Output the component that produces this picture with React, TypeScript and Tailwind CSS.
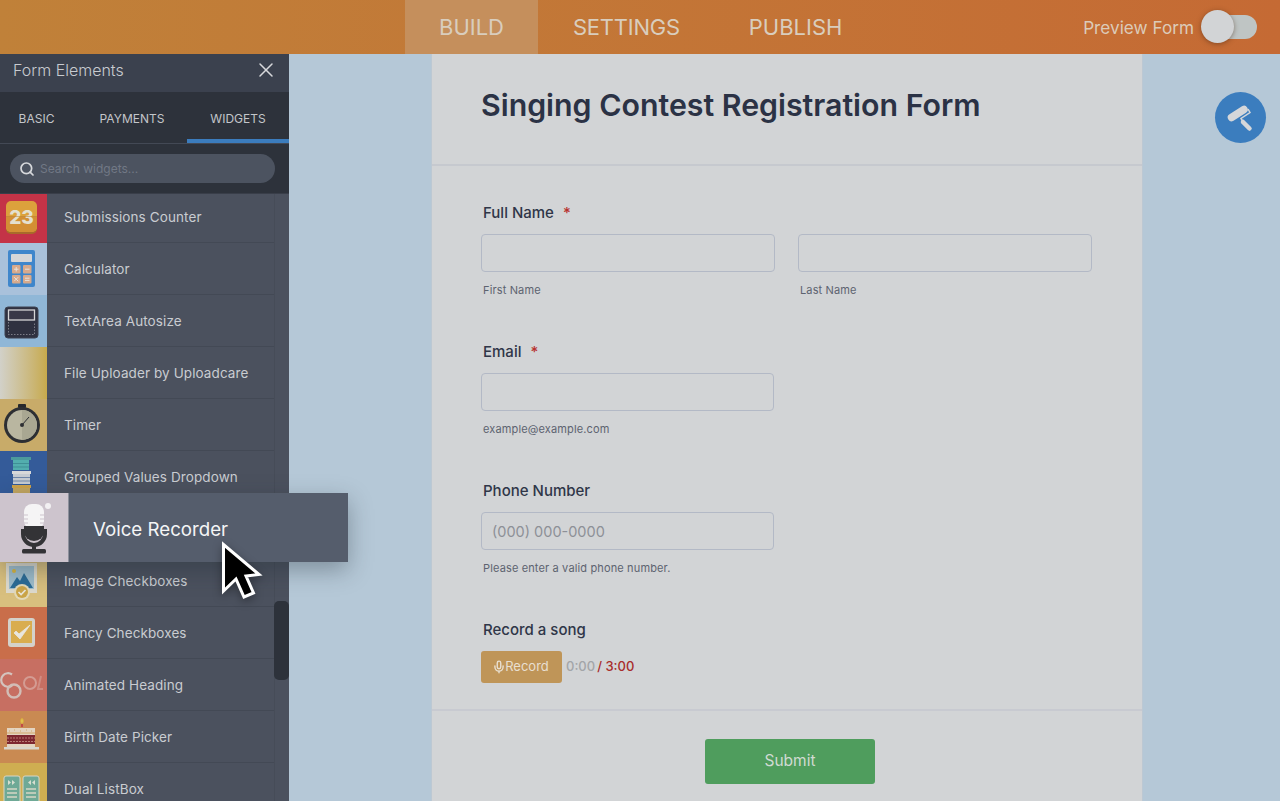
import { FC, ReactNode } from "react";
import { Mic, Search, X } from "lucide-react";

// Small widget tiles, all drawn on a 47x52 box
const Tile: FC<{ children: ReactNode }> = ({ children }) => (
  <svg viewBox="0 0 47 52" width="47" height="52" className="block">
    {children}
  </svg>
);

const CounterIcon = () => (
  <Tile>
    <rect x="6" y="11" width="31" height="32" rx="5" fill="#a96a2a" />
    <rect x="6" y="10" width="31" height="31" rx="5" fill="#dca13c" />
    <path d="M6 25h31v11a5 5 0 0 1-5 5H11a5 5 0 0 1-5-5z" fill="#d38f34" />
    <text x="21.5" y="32.5" textAnchor="middle" fontSize="19" fontWeight="800" fill="#e4e0cf" fontFamily="Inter, sans-serif">
      23
    </text>
    <rect x="6" y="25" width="31" height="0.6" fill="#c08a3a" />
  </Tile>
);

const CalculatorIcon = () => (
  <Tile>
    <rect x="8" y="7" width="27" height="37" rx="2" fill="#3f86cb" />
    <rect x="11" y="11" width="21" height="8" rx="1" fill="#d5d6d8" />
    {[
      [12, 22],
      [23, 22],
      [12, 32],
      [23, 32],
    ].map(([x, y]) => (
      <rect key={`${x}-${y}`} x={x} y={y} width="8.5" height="8.5" rx="1" fill="#d6a98c" />
    ))}
    <path d="M14 26.2h4.5M16.2 24v4.5M25 26.2h4.5M14.2 34.2l4 4M18.2 34.2l-4 4M25 35.2h4.5M25 37.4h4.5" stroke="#e6e2dc" strokeWidth="1" fill="none" />
  </Tile>
);

const TextAreaIcon = () => (
  <Tile>
    <rect x="5" y="12" width="33" height="31" rx="3" fill="#2f3140" stroke="#3e4351" />
    <rect x="8.5" y="15" width="26" height="10" fill="#3a3848" stroke="#d6d5d6" strokeWidth="1.3" />
    <path d="M8.5 27v12.5h26V27" fill="none" stroke="#8f909a" strokeWidth="0.8" strokeDasharray="1.5 1.5" />
  </Tile>
);

const TimerIcon = () => (
  <Tile>
    <rect x="18" y="5" width="8" height="4" rx="1" fill="#26282c" />
    <circle cx="22" cy="26" r="18" fill="#2d2f33" />
    <circle cx="22" cy="26" r="15" fill="#b9b6a0" />
    <path d="M22 11a15 15 0 0 1 0 30z" fill="#a9a792" />
    <path d="M22 26l7-8" stroke="#2d2f33" strokeWidth="1" />
    <circle cx="22" cy="26" r="2" fill="#2d2f33" />
  </Tile>
);

const StackIcon = () => (
  <Tile>
    <rect x="11" y="6" width="20" height="3" fill="#4b9a9c" />
    <rect x="13" y="9" width="16" height="10" fill="#52aeae" />
    <path d="M13 12.5h16M13 16h16" stroke="#3f8f95" />
    <rect x="12" y="20" width="19" height="3" fill="#d7d8d9" />
    <rect x="13" y="23" width="17" height="10" fill="#c5cbd2" />
    <path d="M13 26.5h17M13 30h17" stroke="#6e86a9" />
    <rect x="12" y="34" width="19" height="3" fill="#cda249" />
    <rect x="13" y="37" width="17" height="8" fill="#c3a660" />
  </Tile>
);

const ImageCheckIcon = () => (
  <Tile>
    <rect x="6" y="8" width="31" height="30" fill="#dcd9cd" />
    <rect x="9" y="11" width="25" height="23" fill="#9dbccb" />
    <circle cx="14" cy="16" r="2" fill="#d7b53f" />
    <path d="M10 33l7-11 3 4 4-8 9 15z" fill="#2c6c96" />
    <circle cx="22" cy="37" r="8" fill="#e3d9b8" />
    <circle cx="22" cy="37" r="6" fill="#cba548" />
    <path d="M18.5 37l2.6 2.6 4.4-4.6" stroke="#e8e5da" strokeWidth="1.7" fill="none" />
  </Tile>
);

const CheckBoxIcon = () => (
  <Tile>
    <rect x="8" y="11" width="27" height="29" rx="3" fill="#d4d2ca" />
    <rect x="11" y="14" width="21" height="22" fill="#d9ad4f" />
    <path d="M14 26l2-2 3 3 11-9-10 14z" fill="#e8e6de" stroke="#e8e6de" strokeWidth="0.8" strokeLinejoin="round" />
  </Tile>
);

const CoolIcon = () => (
  <Tile>
    <path d="M12 15.5a6.8 6.8 0 1 0 0 11" fill="none" stroke="#d4c4be" strokeWidth="2.2" />
    <circle cx="14" cy="32" r="6.5" fill="none" stroke="#d2bdb6" strokeWidth="2.4" />
    <circle cx="30" cy="24" r="6" fill="none" stroke="#d49c93" strokeWidth="2" />
    <path d="M41 17l-3 13h5" fill="none" stroke="#d08c82" strokeWidth="2" />
  </Tile>
);

const CakeIcon = () => (
  <Tile>
    <path d="M22 7c-2 2-2 4 0 6 2-2 2-4 0-6z" fill="#e1c24f" stroke="#d9a93f" />
    <rect x="21" y="13" width="2" height="3" fill="#c24a46" />
    <rect x="7" y="17" width="28" height="19" fill="#e3d4c0" />
    <path d="M7 22h28M9 20h1M14 19h1M20 20h1M26 19h1M31 20h1" stroke="#d2a76a" strokeWidth="1" />
    <rect x="7" y="24" width="28" height="9" fill="#7d2730" />
    <path d="M7 27h28M7 30.5h28" stroke="#c69186" strokeWidth="0.8" strokeDasharray="2 1" />
    <rect x="4" y="36" width="35" height="2.5" fill="#d9d6cc" />
  </Tile>
);

const DualListIcon = () => (
  <Tile>
    {[4, 23].map((x) => (
      <g key={x}>
        <rect x={x} y="13" width="16" height="39" rx="2" fill="#6fa996" stroke="#d8d5c5" />
        <path d={`M${x + 3} 26h10M${x + 3} 30h10M${x + 3} 34h10`} stroke="#d6d6c5" strokeWidth="1.6" />
      </g>
    ))}
    <path d="M8 17l3 2.5-3 2.5zM12 17l3 2.5-3 2.5zM35 17l-3 2.5 3 2.5zM31 17l-3 2.5 3 2.5z" fill="#d8dfd0" />
  </Tile>
);

const widgets: { name: string; bg: string; icon?: ReactNode }[] = [
  { name: "Submissions Counter", bg: "bg-[#c43347]", icon: <CounterIcon /> },
  { name: "Calculator", bg: "bg-[#a9c1db]", icon: <CalculatorIcon /> },
  { name: "TextArea Autosize", bg: "bg-[#90b7d7]", icon: <TextAreaIcon /> },
  { name: "File Uploader by Uploadcare", bg: "bg-gradient-to-r from-[#d2d1c9] to-[#c7aa4b]" },
  { name: "Timer", bg: "bg-[#c8ab69]", icon: <TimerIcon /> },
  { name: "Grouped Values Dropdown", bg: "bg-[#345b99]", icon: <StackIcon /> },
  { name: "", bg: "bg-[#cdc4cd]" },
  { name: "Image Checkboxes", bg: "bg-[#d8bf7e]", icon: <ImageCheckIcon /> },
  { name: "Fancy Checkboxes", bg: "bg-[#c96e4a]", icon: <CheckBoxIcon /> },
  { name: "Animated Heading", bg: "bg-[#c76f62]", icon: <CoolIcon /> },
  { name: "Birth Date Picker", bg: "bg-[#c98a52]", icon: <CakeIcon /> },
  { name: "Dual ListBox", bg: "bg-[#cfae51]", icon: <DualListIcon /> },
];

const FieldLabel: FC<{ text: string; required?: boolean }> = ({ text, required }) => (
  <label className="block h-5 pl-[2px] pt-[1px] text-[15px] leading-5 font-medium text-[#2f3648]">
    {text}
    {required && <span className="ml-[9px] text-[#b8322f]">*</span>}
  </label>
);

const TextInput: FC<{ width: string; placeholder?: string }> = ({ width, placeholder }) => (
  <input
    placeholder={placeholder}
    readOnly
    className={`${width} block h-[38px] rounded-[4px] border border-[#b3b9c6] bg-transparent px-[10px] text-[14.5px] text-[#2f3648] outline-none placeholder:text-[#8d9097]`}
  />
);

const SubLabel: FC<{ text: string }> = ({ text }) => (
  <p className="mt-[11px] h-[14px] pl-[2px] text-[11px] leading-[14px] tracking-[0.14px] text-[#5d6370]">{text}</p>
);

const App: FC = () => {
  return (
    <div className="flex h-screen flex-col overflow-hidden bg-[#b5c8d7] font-['Inter',sans-serif]">
      {/* Top bar */}
      <header className="flex h-[54px] shrink-0 items-center bg-gradient-to-r from-[#c08139] to-[#c56a34] pl-[405px] pr-[23px]">
        <nav className="flex h-full text-[22px] text-[#d9cdbd]">
          <div className="flex w-[133px] items-center justify-center bg-[#c58f5c]">BUILD</div>
          <div className="flex items-center px-[35px] tracking-[-0.25px]">SETTINGS</div>
          <div className="flex items-center px-[34px]">PUBLISH</div>
        </nav>

        <div className="ml-auto flex items-center">
          <span className="mt-[2px] text-[17.2px] text-[#dccbb9]">Preview Form</span>
          <div className="relative ml-[11px] h-6 w-[52px] rounded-full bg-[#bfc5c4]">
            <div className="absolute left-[-4px] top-[-5px] h-[33px] w-[33px] rounded-full bg-[#d2d4d6] shadow-[0_1px_5px_rgba(70,40,20,0.5)]" />
          </div>
        </div>
      </header>

      <div className="relative flex min-h-0 flex-1">
        {/* Form elements sidebar */}
        <aside className="flex w-[289px] shrink-0 flex-col overflow-hidden bg-[#4b515e]">
          <div className="flex h-[38px] shrink-0 items-center justify-between bg-[#3b414e] pb-[6px] pl-[13px] pr-[11px]">
            <span className="text-[16px] font-light text-[#c8cbd0]">Form Elements</span>
            <X size={24} strokeWidth={1.5} className="text-[#d8d9dc]" />
          </div>

          <div className="flex h-[52px] shrink-0 border-b border-[#434955] bg-[#2d323b] text-[12px] text-[#c3c6ca]">
            <div className="flex w-[73px] items-center justify-center pt-[3px]">BASIC</div>
            <div className="flex w-[114px] items-center justify-center pl-[4px] pt-[3px]">PAYMENTS</div>
            <div className="flex w-[102px] items-center justify-center border-b-4 border-[#3b7cbd] pt-[7px]">WIDGETS</div>
          </div>

          {/* Search */}
          <div className="relative z-10 h-[50px] shrink-0 border-b border-[#393e49] bg-[#2d323b] px-[10px] pt-[10px]">
            <div className="flex h-[29px] w-[265px] items-center rounded-full bg-[#4c5360] pl-[9px]">
              <Search size={16} strokeWidth={2.6} className="text-[#d6d8db]" />
              <span className="ml-[5px] text-[12px] text-[#717885]">Search widgets...</span>
            </div>
          </div>

          <div className="-mt-[3px] flex">
            <ul className="w-[274px] shrink-0">
              {widgets.map((w) => (
                <li key={w.name || "dragged"} className="flex h-[52px] items-center border-b border-[#434955]">
                  <div className={`${w.bg} h-[52px] w-[47px] shrink-0`}>{w.icon}</div>
                  <span className="ml-[17px] mt-[2px] text-[13.5px] tracking-[0.1px] text-[#c9ccd1]">{w.name}</span>
                </li>
              ))}
            </ul>

            {/* Scrollbar */}
            <div className="w-[15px] border-l border-[#464c58]">
              <div className="-ml-[1px] mt-[410px] h-[79px] w-[15px] rounded-[5px] bg-[#2d323b]" />
            </div>
          </div>
        </aside>

        {/* Form preview */}
        <main className="ml-[142px] w-[712px] shrink-0 border-x border-[#bcc8d3] bg-[#d2d4d6]">
          <div className="h-[112px] border-b-2 border-[#c6c9cf] pl-[49px] pt-[30px]">
            <h1 className="text-[30.3px] leading-[42px] font-semibold text-[#2b3245]">Singing Contest Registration Form</h1>
          </div>

          <div className="pl-[49px] pt-[36px]">
            <div className="mb-[44px]">
              <FieldLabel text="Full Name" required />
              <div className="mt-3 flex gap-[23px]">
                <div>
                  <TextInput width="w-[294px]" />
                  <SubLabel text="First Name" />
                </div>
                <div>
                  <TextInput width="w-[294px]" />
                  <SubLabel text="Last Name" />
                </div>
              </div>
            </div>

            <div className="mb-[44px]">
              <FieldLabel text="Email" required />
              <div className="mt-3">
                <TextInput width="w-[293px]" />
                <SubLabel text="example@example.com" />
              </div>
            </div>

            <div className="mb-[44px]">
              <FieldLabel text="Phone Number" />
              <div className="mt-3">
                <TextInput width="w-[293px]" placeholder="(000) 000-0000" />
                <SubLabel text="Please enter a valid phone number." />
              </div>
            </div>

            <FieldLabel text="Record a song" />
            <div className="mt-3 flex items-center">
              <button className="flex h-8 w-[81px] items-center justify-center rounded-[3px] bg-[#bf9558] pr-[2px] text-[13px] text-[#e8dfd0]">
                <Mic size={14} strokeWidth={2.4} className="mr-[-1px]" />
                Record
              </button>
              <span className="ml-[4px] text-[13px] font-medium text-[#a3a5a8]">0:00</span>
              <span className="ml-[2px] text-[13px] font-medium text-[#a82c2b]">/ 3:00</span>
            </div>
          </div>

          <div className="mt-[26px] h-[2px] bg-[#c8cad1]" />

          <button className="ml-[273px] mt-[28px] block h-[45px] w-[170px] rounded-[3px] bg-[#4f9d5d] pb-[1px] text-[15.5px] text-[#d0dad2]">
            Submit
          </button>
        </main>

        {/* Theme button */}
        <div className="absolute right-[14px] top-[38px] flex h-[51px] w-[51px] items-center justify-center rounded-full bg-[#3b7dbe]">
          <svg viewBox="0 0 51 51" width="51" height="51">
            <path d="M16.5 25.5l12.5-8" stroke="#d5d7da" strokeWidth="7.5" strokeLinecap="round" fill="none" />
            <path d="M33 17l2 3.5-9 6 1.5 2.5" stroke="#d5d7da" strokeWidth="1.5" fill="none" />
            <path d="M28 30l6.5 6.5" stroke="#d5d7da" strokeWidth="4.5" strokeLinecap="round" fill="none" />
          </svg>
        </div>

        {/* Dragged widget */}
        <div className="absolute left-0 top-[439px] flex h-[69px] w-[348px] items-center bg-[#555d6c] shadow-[0_8px_22px_rgba(30,40,50,0.35)]">
          <div className="h-[69px] w-[69px] shrink-0 border-r border-[#8d909b] bg-[#cdc4cd]">
            <svg viewBox="0 0 69 68" width="69" height="68" className="block">
              <circle cx="48" cy="13" r="3" fill="#f2f0f2" />
              <rect x="24" y="11" width="20" height="25" rx="8" fill="#f5f4f5" />
              <path d="M24 22h4M40 22h4M24 26h4M40 26h4M24 30h4M40 30h4" stroke="#cdc4cd" strokeWidth="1" />
              <path d="M24 33h20v6a10 9 0 0 1-20 0z" fill="#333336" />
              <path d="M23 36v5a11 11 0 0 0 22 0v-5" fill="none" stroke="#333336" strokeWidth="4" />
              <rect x="32" y="50" width="4" height="7" fill="#333336" />
              <rect x="22" y="56" width="24" height="4.5" rx="1.5" fill="#333336" />
            </svg>
          </div>
          <span className="ml-6 mt-[6px] text-[18.7px] text-[#f4f5f6]">Voice Recorder</span>
        </div>

        {/* Mouse cursor */}
        <svg viewBox="0 0 44 60" width="44" height="60" className="absolute left-[220px] top-[487px] drop-shadow-[0_3px_5px_rgba(0,0,0,0.35)]">
          <path d="M3.5 3.5V50l12.5-12 8 18 9.5-4-7.5-17 13-1.5z" fill="#000" stroke="#fff" strokeWidth="3" strokeLinejoin="miter" />
        </svg>
      </div>
    </div>
  );
};

export default App;
